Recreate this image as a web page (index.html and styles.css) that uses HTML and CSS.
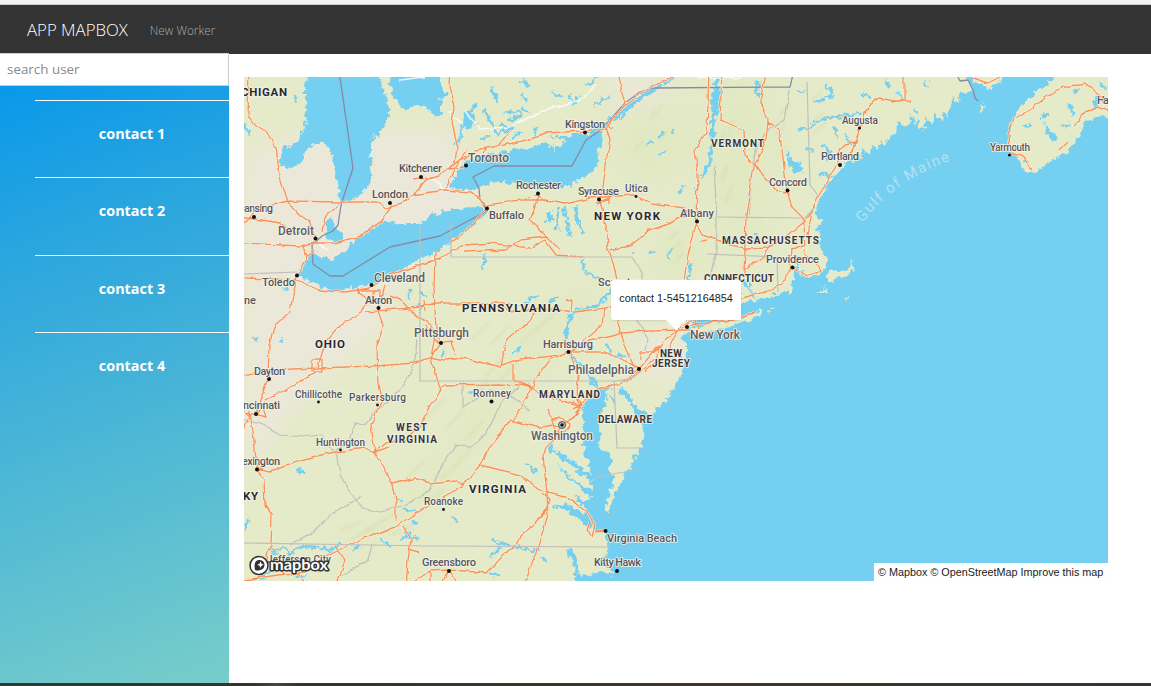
FILE: index.html
```html
<!DOCTYPE html>
<html lang="en">
<head>
<meta charset="utf-8">
<title>App Mapbox</title>
<link rel="stylesheet" href="styles.css">
</head>
<body>
<div class="top-strip"></div>
<header class="navbar">
  <a class="brand">APP MAPBOX</a>
  <nav><a class="nav-link">New Worker</a></nav>
</header>
<main class="layout">
  <aside class="sidebar">
    <input class="search" type="text" placeholder="search user">
    <ul class="contacts">
      <li class="contact">contact 1</li>
      <li class="contact">contact 2</li>
      <li class="contact">contact 3</li>
      <li class="contact">contact 4</li>
    </ul>
  </aside>
  <section class="content">
    <div class="map">
      <svg class="map-canvas" width="864" height="504" viewBox="244 77 864 504">
        <defs>
          <filter id="coast" filterUnits="userSpaceOnUse" x="234" y="67" width="884" height="524" color-interpolation-filters="sRGB">
            <feTurbulence type="fractalNoise" baseFrequency="0.17" numOctaves="3" seed="8" result="n"/>
            <feDisplacementMap in="SourceGraphic" in2="n" scale="9" xChannelSelector="R" yChannelSelector="G"/>
          </filter>
          <filter id="wobble" filterUnits="userSpaceOnUse" x="234" y="67" width="884" height="524" color-interpolation-filters="sRGB">
            <feTurbulence type="fractalNoise" baseFrequency="0.09" numOctaves="2" seed="3" result="n"/>
            <feDisplacementMap in="SourceGraphic" in2="n" scale="5" xChannelSelector="R" yChannelSelector="G"/>
          </filter>
          <filter id="soft" x="-30%" y="-30%" width="160%" height="160%"><feGaussianBlur stdDeviation="12"/></filter>
          <filter id="relief" x="-10%" y="-10%" width="120%" height="120%"><feGaussianBlur stdDeviation="1.5"/></filter>
          <path id="land-shape" d="M230,60 L965,60 968,80 974,90 966,92 960,95 957,105 953,98 950,108 948,118 943,110 941,122 935,114 932,124 927,118 925,128 920,130 918,118 915,125 912,116 908,124 903,127 899,120 895,135 890,134 886,146 881,141 878,152 872,144 870,154 864,148 862,158 856,153 854,163 850,157 842,168 835,175 828,183 822,195 817,205 815,215 821,221 816,228 820,234 817,243 821,250 827,258 826,268 818,275 806,278 800,275 796,262 794,275 791,292 775,294 760,299 745,303 725,310 705,316 693,321 689,329 681,338 686,346 686,354 683,368 678,380 672,391 665,400 655,411 651,419 645,412 637,408 630,396 622,386 620,392 629,402 633,412 643,420 642,432 643,446 636,455 628,470 620,485 612,500 607,514 605,505 611,490 614,478 609,470 612,462 606,452 597,445 603,437 597,428 600,412 607,405 603,397 611,387 602,388 594,395 588,399 582,410 584,425 583,445 588,462 592,476 583,470 575,462 562,455 554,450 551,438 550,450 563,460 578,470 591,481 593,489 585,487 572,478 555,461 567,476 582,489 592,499 582,501 572,495 586,510 582,513 568,504 552,505 568,511 578,518 590,529 605,531 608,542 609,550 605,558 597,562 607,566 613,573 621,595 230,595 Z"/>
          <clipPath id="land-clip"><use href="#land-shape"/></clipPath>
          <path id="gulf" d="M863,223 Q893,180 960,157"/>
          <g id="roads">
            <path d="M249,70L248,115 255,126 266,131 276,147 279,170 281,180 286,195 288,202 300,215 310,222 315,238 M244,223L256,210 272,205 288,201 339,202 377,202 386,208 402,204 415,193 427,180 440,175 455,164 466,156 M244,218L262,220 280,223 290,230 312,236 M340,203L325,218 322,232 M315,243L335,243 360,236 380,222 392,206 M244,243L300,246 318,242 M455,164L457,145 452,122 454,108 449,85 450,70 M412,195L445,190 470,192 485,203 M464,160L475,150 505,145 525,140 545,133 585,131 605,128 625,105 650,88 672,77 M616,70L625,103 M497,147L511,130 M606,126L610,140 605,165 600,200 608,235 609,250 613,262 617,280 M466,150L450,178 446,188 M455,160L448,170 464,168 M413,180L427,178 M480,149L486,149 484,155"/>
            <path d="M470,192L487,205 520,200 545,200 566,204 590,198 604,197 635,195 650,203 665,205 684,208 697,222 M538,195L534,210 530,220 547,237 560,250 M547,237L520,240 505,250 464,252 M609,250L630,246 650,230 675,220 690,214 M525,199L535,194 545,201 M487,207L470,227 450,243 M709,70L707,132 695,150 698,175 697,222 688,255 683,285 M722,70L720,120 744,130 745,155 755,165 762,175 775,190 787,192 M767,70L760,100 768,120 766,140 754,166 750,190 746,215 744,275 M768,122L779,130 782,150 787,190 791,205 803,217 806,245 M912,101L895,101 878,98 865,112 860,128 855,143 845,145 838,150 838,165 828,180 818,197 812,210 808,235 M697,225L702,235 720,241 735,247 745,249 770,248 785,237 803,222 813,210 M904,70L904,100 890,102 M858,135L853,152 840,160 M974,78L988,83 1000,77"/>
            <path d="M1009,149L1008,135 1014,118 1030,110 1045,98 1060,88 1085,83 1100,95 1112,103 M1112,112L1098,107 1083,113 1075,127 M1009,152L1022,155 1032,169 M1068,142L1060,150 M297,275L293,295 290,312 275,325 269,345 268,378 262,395 256,412 M303,245L306,258 297,275 M244,278L297,280 320,290 345,292 370,288 390,275 420,265 440,258 465,245 490,243 530,248 545,240 556,255 583,257 M375,290L362,312 340,325 325,342 318,368 M244,375L270,373 290,369 318,368 375,366 415,363 430,358 440,345 M318,370L295,385 265,400 256,415 M385,285L378,308 384,325 377,345 378,385 382,400 376,413 371,425 375,453 385,470 393,485 396,500 396,520 M365,312L420,307 435,303 510,303 M390,295L400,299 410,310 430,325 441,343 M435,252L434,290 436,330 431,358 436,378 441,390 430,408 420,425 405,440 385,443 375,452 M312,360H322V371H312Z M357,290H380V300H368Z M424,300L425,312 M424,325L438,343 451,341 455,355 M315,250L308,256 302,245"/>
            <path d="M431,357L445,360 464,358 480,362 500,367 520,360 560,355 568,352 605,352 625,362 640,368 M501,366L507,340 530,320 535,312 M500,303L510,312 540,308 575,312 605,308 640,302 M566,300L573,299 572,312 M605,308L603,325 585,340 572,352 M568,352L550,360 535,380 532,390 513,420 M440,388L445,385 500,384 520,385 532,388 545,395 575,405 580,408 M513,365L513,380 533,388 M570,353L578,375 577,400 580,406 M572,350L590,340 620,333 650,331 680,330 M617,320L625,345 635,368 M640,368L620,385 600,388 580,405 M640,368L655,350 670,335 687,325 M580,407L572,418 563,425 540,428 510,420 495,440 480,465 464,485 440,500 425,508 410,517 395,527 365,538 345,547 320,560 305,572 285,574 244,580 M244,431L250,412 M250,410L254,440 257,468 264,480 265,505 272,515 271,545 266,555 268,570 M257,468L270,471 300,460 330,453 365,448 375,453 390,447 M393,484L415,478 430,483 455,480 464,485 M403,526L411,540 408,560 406,590"/>
            <path d="M409,549L418,552 M412,583L430,571 449,570 464,571 486,573 500,558 515,545 520,537 545,514 M335,546L345,560 335,590 M481,465L500,470 520,475 535,487 547,493 570,498 585,510 595,525 592,535 587,530 590,522 M560,428L553,440 543,455 545,475 547,493 548,515 540,540 535,555 522,590 M595,532L605,531 M684,285L680,310 684,318 675,335 665,355 645,372 M700,241L707,240 M744,270L765,255 775,240 M730,302L742,298 765,292 780,285 790,270 792,250 806,245 M690,325L710,322 735,320 755,312 M792,266L806,276 820,270 815,262 806,256 804,250 M652,352L658,345 657,358 645,368 625,383 M640,360V352H652 M573,402L585,410 M577,398L583,405 572,409 M552,420L560,417 570,424 564,433 555,432Z M555,421L548,408 M570,420L580,410 M430,571V590 M449,570L443,581 M449,570L455,581 M285,574L278,568 M298,572L309,590 M664,357H683 M607,125L614,128 M597,203L612,197 M609,203V192 M695,320L700,330 M697,318L683,325 M678,330H692 M548,508L540,518 550,500 543,494 M244,412L266,417 262,405"/>
          </g>
        </defs>
        <rect x="244" y="77" width="864" height="504" class="water"/>
        <g filter="url(#coast)">
          <use href="#land-shape" class="land"/>
          <path class="land" d="M970,66 H1003 L1000,82 987,90 972,80Z M1108,66 H1066 L1050,82 1030,96 1018,110 1010,122 1008,150 1018,158 1026,172 1036,174 1048,161 1065,155 1072,145 1082,131 1085,121 1102,116 1115,120 1115,66Z"/>
          <path class="land" d="M686,330 L700,326 720,321 740,317 747,314 755,312 748,319 732,326 710,332 691,336Z M744,319 L760,311 762,314 748,321Z M825,275 L829,270 845,272 852,268 851,275 840,278 828,283Z M817,292 L826,287 829,292Z M845,297 L852,298 851,300 844,299Z M850,258 L853,270 849,269Z M984,100 L984,111 979,113Z M768,311 L775,308 774,311Z"/>
        </g>
        <g clip-path="url(#land-clip)">
          <g filter="url(#soft)" class="plain">
            <path d="M244,150 L300,140 330,130 380,130 450,130 480,200 440,250 390,300 380,330 300,400 244,470Z"/>
            <ellipse cx="635" cy="95" rx="28" ry="22"/><ellipse cx="665" cy="355" rx="30" ry="25"/>
          </g>
          <g filter="url(#soft)" class="forest">
            <ellipse cx="740" cy="160" rx="40" ry="80"/><ellipse cx="680" cy="255" rx="20" ry="30"/>
            <path d="M410,500 L520,340 580,290 590,310 500,420 440,500 340,560 310,560Z"/>
            <ellipse cx="650" cy="140" rx="40" ry="40"/>
          </g>
          <g filter="url(#relief)" class="ridge">
            <path d="M670,240l8,-10 M667,255l14,-14 M675,262l9,-9 M725,130l-6,18 M733,120l-4,15 M728,165l-7,17 M733,185l-8,18 M780,115l10,-12 M776,135l10,-12 M780,155l8,-10 M812,100l10,-8 M815,120l8,-8 M812,135l12,-10"/>
            <path d="M485,378l17,-20 M497,383l18,-18 M520,343l20,-17 M490,345l20,-20 M470,340l20,-18 M535,330l18,-15 M470,400l18,-20 M465,440l18,-18 M455,465l18,-18 M440,480l17,-15 M430,500l14,-10 M365,530l30,-16 M350,540l25,-12 M425,420l20,-22 M405,480l20,-20 M445,430l20,-22 M340,530l22,-9 M390,535l20,-8 M650,120l12,-15 M660,140l8,-10 M635,150l8,-8"/>
          </g>
        </g>
        <g filter="url(#coast)">
          <g class="water">
            <path d="M306,60 L305,95 306,110 305,127 298,140 285,148 279,155 280,166 287,169 298,165 305,152 318,142 330,148 334,165 338,190 340,203 350,201 360,195 371,182 371,142 385,125 389,115 388,100 382,90 378,60Z"/>
            <path d="M387,60 L393,95 400,106 408,112 415,104 425,107 437,118 442,107 440,98 449,95 440,85 437,60Z"/>
            <path d="M326,221 L332,219 335,228 342,231 342,241 334,242 325,236Z"/>
            <path d="M313,250 L318,256 330,259 345,252 352,242 365,232 375,225 390,221 400,224 420,224 430,215 450,210 470,207 486,208 485,216 470,228 464,232 450,242 435,252 415,262 400,270 385,281 370,284 357,287 340,291 332,291 318,287 308,280 297,275 305,262Z"/>
            <path d="M466,163 L480,157 500,152 530,148 545,142 556,149 566,140 549,136 570,136 580,133 588,135 600,131 602,143 598,155 595,170 585,176 570,186 545,187 520,183 495,182 480,188 465,191 450,187 453,176 460,168Z"/>
            <path d="M464,111 L473,111 476,122 471,129 463,127Z M712,88 L721,92 718,116 713,120 711,104Z M788,157 L800,164 803,172 792,172Z M1051,130 L1058,138 1053,142 1047,137Z M1044,122 L1051,130 1047,135Z M567,547 L576,555 580,577 600,573 618,577 620,590 575,590 575,570Z"/>
          </g>
          <g class="stream">
            <path d="M590,134 L606,124 632,104 655,88 680,72" stroke-width="4"/>
            <path d="M718,75 L713,120 712,150 708,168 700,177" stroke-width="3.5"/>
            <path d="M551,211l-4,11 M558,208l-2,24 M564,206l6,30 M575,206l2,15 M575,216l9,18 M552,215l-3,8" stroke-width="3"/>
            <path d="M483,110l7,10 8,14 M503,113l15,-2 2,6 -14,3 M498,125l15,3 -15,6 M483,140l7,-5 M511,138l10,-6 M535,137v-9 M521,80l8,6 M521,93l6,8 M492,88l5,14 M478,103l-8,8 M520,107l8,6 M553,92l8,6 M569,94l5,10 5,-8 M586,86l12,-9 M594,106l14,-9 M620,120l6,-8" stroke-width="2.5"/>
            <path d="M659,138l6,-7 M660,154l6,-3 M672,129l2,5 M645,146l7,-4 M678,194l6,-8 M695,187l5,-4 M800,90l6,2 M814,99l7,5 M825,84l8,10 -14,8 M860,93l10,5 M845,135l6,10 M823,145l8,10 -5,5 M834,127l3,9 M806,148l8,4 M820,173l10,4 M787,153l3,13 M758,80v18 M812,123l20,-6 28,-3 M797,130l18,-4 M886,80l3,8 M898,94l5,6 M925,80l5,7 M913,108l5,7 M897,90l2,7 M960,90l4,8" stroke-width="2.5"/>
            <path d="M1030,124l-5,3 M1060,127l10,-2 M1070,104l3,10 M1072,93l6,-3 M1097,95l-2,12 M1100,82l6,6 M1049,114l-8,3 M1024,160l4,3" stroke-width="3"/>
            <path d="M244,125l6,10 M295,95l3,9 M253,338h7 M280,341h4 M409,289v10 M420,294l9,2 M420,305v6 M445,350l-4,8 M283,289l8,-4 M462,126l-4,18 M460,138l-6,8 M485,254l-2,16 M583,260l2,12 15,8 M613,290l-15,15 -25,6 -6,14 -2,14 M570,355l15,14 12,18 12,12 M521,346l-8,8 M607,345l3,9 17,3 M630,253l4,2 M649,254l8,-3 M670,250l-2,10 M691,262l-3,20 M756,233v10 M745,282l10,14 M797,257v22 M803,270v10 M525,302l12,-6 M548,304l10,-8 M526,463l10,9 M296,467l8,7 M244,530l5,-10 M352,551l8,-6 M450,516l8,6 M400,540l12,-8 M395,497l8,5 M410,520l8,4 M405,533l14,7 M391,545l-10,-4 M400,508l20,4 M492,540l25,8 22,3 M500,548l-8,8 M490,573l10,3 M270,554l12,-6 10,5 10,-7 18,1 8,5 12,-8 M260,579l12,-8 M296,577l10,-2 M468,393l4,-3 M547,562l-6,-6 M616,405l-5,-10 M593,392l-4,8 M577,470l5,6 M604,452l-8,6 M595,405l-8,12" stroke-width="2.5"/>
          </g>
        </g>
        <path class="country" d="M339,70L353,168 341,205 338,225 333,231 322,236 312,245 313,264 330,276 343,276 390,247 440,236 487,211 480,200 479,188 473,177 494,166 572,166 586,140 598,132 610,120 625,103 640,92 653,88 790,87 794,70 M958,77L960,81 968,80 973,90 975,98 978,101"/>
        <g filter="url(#wobble)">
          <g class="state">
            <path d="M714,165L717,222 716,252 707,290 M790,90L785,120 770,127 755,150 752,180 748,215 M244,419L262,425 280,435 303,437 322,435 330,447 336,452 340,475 352,495 363,508 380,512 405,505 430,490 440,470 455,445 470,447 485,435 500,405 520,385 M632,257L638,267 642,275 640,300 637,322 648,338 646,350"/>
            <path d="M362,497L330,515 310,535 290,545 M417,340L415,360 405,385 390,400 376,410 365,425 355,423 350,440 336,450 M463,381V408L490,390 507,394 530,410 M372,545L368,560 350,570 340,576"/>
          </g>
          <path class="minor" d="M464,110L480,129 510,127 540,112 580,100 597,85 M400,80L425,77 M464,126L450,112 M432,178L446,192 M318,242L328,252 M697,78L740,78"/>
          <use href="#roads" class="casing"/>
          <use href="#roads" class="road"/>
        </g>
        <path class="state" d="M420,225V381H610Q630,382 640,372 M451,222V257H632 M717,217L805,218 815,207 M807,82L810,185 818,195 M707,254L777,257 778,292 M244,543L430,546 610,547 M244,274L297,272 M614,381L617,448H643 M636,470L596,477"/>
        <g class="dots">
          <circle cx="315.500" cy="238.500" r="2"/><circle cx="254" cy="217" r="2"/><circle cx="390" cy="203" r="2"/><circle cx="421" cy="177" r="2"/><circle cx="466" cy="165.500" r="2"/><circle cx="585" cy="132.500" r="2"/><circle cx="538" cy="193.500" r="2"/><circle cx="599" cy="199.500" r="2"/><circle cx="636" cy="196.500" r="1.400"/><circle cx="487" cy="208.500" r="2"/><circle cx="697" cy="221.500" r="2"/><circle cx="787.500" cy="190.500" r="2"/><circle cx="840" cy="165" r="2"/><circle cx="859.500" cy="128" r="1.500"/><circle cx="1009.500" cy="155" r="1.500"/><circle cx="792.500" cy="267.500" r="2"/><circle cx="687" cy="327" r="2"/><circle cx="639" cy="369" r="2"/><circle cx="568.500" cy="352" r="2"/><circle cx="441" cy="343" r="2"/><circle cx="378.500" cy="308" r="2"/><circle cx="371.500" cy="285" r="2"/><circle cx="297" cy="275.500" r="2"/><circle cx="269" cy="379" r="2"/><circle cx="256" cy="414" r="2"/><circle cx="318.500" cy="402" r="1.400"/><circle cx="377.500" cy="405" r="1.400"/><circle cx="491.500" cy="401.500" r="2"/><circle cx="340.500" cy="450" r="1.400"/><circle cx="257" cy="469.500" r="2"/><circle cx="443.500" cy="509.500" r="1.400"/><circle cx="449" cy="571" r="2"/><circle cx="605.500" cy="531" r="2"/><circle cx="617" cy="571" r="2"/>
          <circle cx="562" cy="425" r="3.500" class="capital"/><circle cx="562" cy="425" r="1.700"/>
        </g>
        <g class="city">
          <text x="468" y="162" textLength="41">Toronto</text><text x="278" y="235" textLength="36">Detroit</text><text x="374" y="282" textLength="51">Cleveland</text><text x="414" y="337" textLength="55">Pittsburgh</text><text x="568" y="374" textLength="66">Philadelphia</text><text x="690" y="339" textLength="50">New York</text><text x="531" y="439.500" textLength="62">Washington</text>
        </g>
        <g class="town">
          <text x="399" y="172" textLength="43">Kitchener</text><text x="372" y="198" textLength="36">London</text><text x="244" y="212" textLength="29">ansing</text><text x="565" y="128" textLength="40">Kingston</text><text x="516" y="189" textLength="45">Rochester</text><text x="578" y="195" textLength="41">Syracuse</text><text x="625" y="192" textLength="23" class="small">Utica</text><text x="489" y="219" textLength="35">Buffalo</text><text x="680" y="217" textLength="34">Albany</text><text x="769" y="186" textLength="38">Concord</text><text x="821" y="160" textLength="38">Portland</text><text x="842" y="124" textLength="36" class="small">Augusta</text><text x="990" y="151" textLength="40" class="small">Yarmouth</text><text x="1097" y="103.500" textLength="12">Ha</text><text x="766" y="262.500" textLength="53">Providence</text><text x="598" y="286" textLength="45">Scranton</text><text x="543" y="348" textLength="50">Harrisburg</text><text x="365" y="304" textLength="27">Akron</text><text x="262" y="286" textLength="33">Toledo</text><text x="244" y="304" textLength="12">ne</text><text x="254" y="375" textLength="31">Dayton</text><text x="243" y="409" textLength="37">ncinnati</text><text x="295" y="397.500" textLength="47" class="small">Chillicothe</text><text x="349" y="401" textLength="57" class="small">Parkersburg</text><text x="473" y="397" textLength="38" class="small">Romney</text><text x="316" y="446" textLength="49" class="small">Huntington</text><text x="242" y="465" textLength="38">exington</text><text x="424" y="505" textLength="39" class="small">Roanoke</text><text x="422" y="566" textLength="54">Greensboro</text><text x="607" y="542" textLength="70">Virginia Beach</text><text x="594" y="566" textLength="47">Kitty Hawk</text><text x="267" y="563" textLength="64" class="small">Jefferson City</text><text x="738" y="299">t</text>
        </g>
        <g class="region">
          <text x="241" y="96" textLength="46">CHIGAN</text><text x="594" y="220" textLength="66">NEW YORK</text><text x="462" y="311.500" textLength="98">PENNSYLVANIA</text><text x="315" y="348" textLength="30">OHIO</text><text x="469" y="492.500" textLength="57">VIRGINIA</text><text x="243" y="500" textLength="15">KY</text>
          <g class="minor-region"><text x="711" y="147" textLength="53">VERMONT</text><text x="722" y="244" textLength="97">MASSACHUSETTS</text><text x="704" y="282" textLength="70">CONNECTICUT</text><text x="660" y="356.500" textLength="22">NEW</text><text x="652" y="367" textLength="38">JERSEY</text><text x="539" y="398" textLength="61">MARYLAND</text><text x="598" y="423" textLength="54">DELAWARE</text><text x="396" y="430.500" textLength="31">WEST</text><text x="387" y="442.500" textLength="50">VIRGINIA</text></g>
        </g>
        <text class="sea"><textPath href="#gulf">Gulf of Maine</textPath></text>
        <g class="logo">
          <circle cx="259" cy="565.500" r="9" class="logo-ring"/>
          <path class="logo-pin" d="M255,570C254,565 254.500,560.500 259,560A5,5 0 1 1 260,570Q257.500,571 255,570Z"/>
          <path class="logo-star" d="M260.500,561.500L261.500,563.800 263.800,564.800 261.500,565.800 260.500,568 259.500,565.800 257.200,564.800 259.500,563.800Z"/>
          <text x="270" y="570" textLength="58" lengthAdjust="spacingAndGlyphs">mapbox</text>
        </g>
      </svg>
      <div class="popup"><div class="popup-body">contact 1-54512164854</div><div class="popup-tip"></div></div>
      <div class="attribution"><a>© Mapbox</a> <a>© OpenStreetMap</a> <a>Improve this map</a></div>
    </div>
  </section>
</main>
<footer class="bottom-strip"></footer>
</body>
</html>
```
FILE: styles.css
```css
* { box-sizing: border-box; }
body { margin: 0; height: 686px; display: flex; flex-direction: column; overflow: hidden; background: #fff; font-family: "Open Sans", sans-serif; }
.top-strip { height: 5px; flex: none; background: #f2f1f0; border-bottom: 1px solid #ccc; }
.navbar { height: 49px; flex: none; display: flex; align-items: center; gap: 22px; padding: 0 27px 0; background: #333; }
.brand { color: #fff; font-size: 16.8px; font-weight: 300; line-height: 24px; }
.nav-link { color: #b0aca6; font-size: 11.8px; font-weight: 300; line-height: 24px; display: block; }
.layout { flex: 1; min-height: 0; display: flex; }
.sidebar { width: 229px; margin-top: -1px; background: linear-gradient(160deg, #0296ec 0%, #29a5df 28%, #78cdca 100%); position: relative; }
.search { display: block; width: 229px; height: 33px; padding: 0 7px 2px; border: 1px solid #ccc; border-left: 0; border-radius: 0; background: #fff; font: 13.4px "Open Sans", sans-serif; outline: 0; }
.search::placeholder { color: #8a8a8a; opacity: 1; }
.contacts { list-style: none; margin: 14px 0 0; padding: 0 0 0 35px; }
.contact { height: 77.4px; padding-top: 22px; border-top: 1px solid #fff; text-align: center; color: #fff; font-size: 14.4px; font-weight: 700; line-height: 22px; }
.content { flex: 1; padding: 23px 43px 0 15px; }
.map { position: relative; width: 864px; height: 504px; overflow: hidden; }
.map-canvas { display: block; }
.water { fill: #75cff0; }
.land { fill: #e5eac9; }
.plain { fill: #ebe8da; }
.forest { fill: #dfe7bd; opacity: .55; }
.ridge { fill: none; stroke: #cbd6a0; stroke-width: 2; opacity: .4; }
.stream { fill: none; stroke: #75cff0; stroke-linejoin: round; }
.state { fill: none; stroke: #bfc0bb; stroke-width: 1.2; }
.country { fill: none; stroke: #858ba3; stroke-width: 1.3; stroke-linejoin: round; }
.minor { fill: none; stroke: #fff; stroke-width: 1.5; opacity: .8; }
.casing { fill: none; stroke: #fdf3df; stroke-width: 2.7; opacity: .75; }
.road { fill: none; stroke: #f8925a; stroke-width: 1.35; stroke-linejoin: round; }
.dots { fill: #111; }
.capital { fill: #bbb; stroke: #555; stroke-width: 1; }
.city, .town, .region { font-family: Roboto, sans-serif; paint-order: stroke; stroke: #f3f3e8; stroke-width: 1.6px; stroke-linejoin: round; }
.city { font-size: 12px; font-weight: 500; fill: #5c5c62; }
.town { font-size: 11px; font-weight: 500; fill: #55555b; }
.small { font-size: 10px; }
.region { font-size: 11.5px; font-weight: 700; fill: #29292f; }
.minor-region { font-size: 10px; fill: #36363c; }
.sea { font: 15px Roboto, sans-serif; letter-spacing: 1.6px; fill: #b2e1f4; }
.logo-ring { fill: #fff; stroke: #333; stroke-width: 1.5; }
.logo-pin { fill: #333; }
.logo-star { fill: #fff; }
.logo text { font: 700 15px Lato, sans-serif; fill: #fff; stroke: #333; stroke-width: 3px; paint-order: stroke; stroke-linejoin: round; }
.popup { position: absolute; left: 367px; top: 203px; width: 130px; display: flex; flex-direction: column; align-items: center; }
.popup-body { width: 130px; height: 40px; padding-top: 8px; border-radius: 2px; background: #fff; box-shadow: 0 1px 2px rgba(0,0,0,.1); text-align: center; white-space: nowrap; color: #222; font: 10.8px/20px "Liberation Sans", sans-serif; }
.popup-tip { border: 10px solid transparent; border-top-color: #fff; border-bottom: 0; }
.attribution { position: absolute; right: 0; bottom: 0; width: 234px; height: 18px; padding: 0 4px; background: rgba(255,255,255,.98); color: #222; font: 10.8px/19px "Liberation Sans", sans-serif; white-space: nowrap; }
.bottom-strip { height: 3px; flex: none; background: linear-gradient(90deg, #33372f 0, #33352f 22%, #454640 24%, #33352f 26%, #3d3630 60%, #353531 100%); }
```
